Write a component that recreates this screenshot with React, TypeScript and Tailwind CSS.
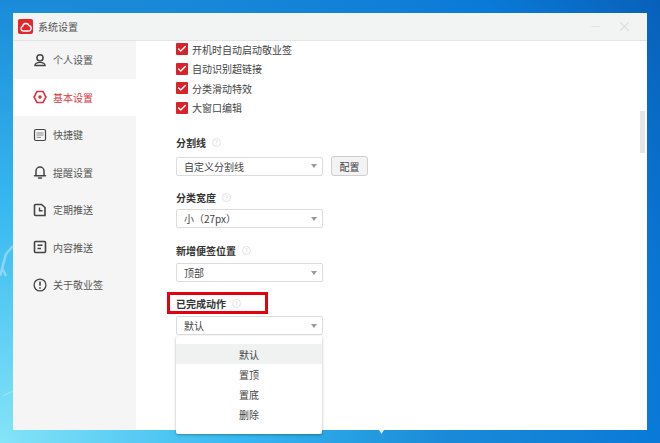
import { Check, Minus, X } from 'lucide-react'

const font = { fontFamily: '"Noto Sans CJK SC", "Noto Sans", sans-serif' }

const menu = [
  { label: '个人设置', icon: 'user' },
  { label: '基本设置', icon: 'gear', active: true },
  { label: '快捷键', icon: 'key' },
  { label: '提醒设置', icon: 'bell' },
  { label: '定期推送', icon: 'clock' },
  { label: '内容推送', icon: 'doc' },
  { label: '关于敬业签', icon: 'info' },
]

function MenuIcon({ name, color }: { name: string; color: string }) {
  return (
    <svg width="14" height="14" viewBox="0 0 14 14" fill="none" stroke={color} strokeWidth="1.5">
      {name === 'user' && (
        <>
          <circle cx="7" cy="4.800" r="3.100" />
          <path d="M1.800 12.500c.4-2.200 2.400-3.200 5.200-3.200s4.800 1 5.200 3.200z" strokeLinejoin="round" strokeWidth="1.300" />
        </>
      )}
      {name === 'gear' && (
        <>
          <path d="M4 1.500h6L13 7l-3 5.500H4L1 7z" strokeWidth="1.600" />
          <circle cx="7" cy="7" r="1.800" fill={color} stroke="none" />
        </>
      )}
      {name === 'key' && (
        <>
          <rect x="1.500" y="1.500" width="11" height="11" rx="1.500" strokeWidth="1.200" />
          <path d="M3.500 5h7M3.500 7h7M3.500 9.300h4.500" strokeWidth="1" stroke="#888" />
        </>
      )}
      {name === 'bell' && (
        <>
          <path d="M3 10.500V6a4 4 0 0 1 8 0v4.500" />
          <path d="M1.500 10.800h11M5.500 13h3" strokeLinecap="round" />
        </>
      )}
      {name === 'clock' && (
        <>
          <path d="M2.500 1.500h6l3.500 3v8h-9.500a1 1 0 0 1-1-1v-9a1 1 0 0 1 1-1z" strokeWidth="1.600" />
          <path d="M6.500 4.500v3.200h3" strokeWidth="1.400" />
        </>
      )}
      {name === 'doc' && (
        <>
          <rect x="1.500" y="1.500" width="11" height="11" rx="1" strokeWidth="1.600" />
          <path d="M4.500 5.200h5M4.500 8.500h3.500" strokeWidth="1.400" />
        </>
      )}
      {name === 'info' && (
        <>
          <circle cx="7" cy="7" r="5.900" strokeWidth="1.300" />
          <path d="M7 3.500v4.300M7 9.300v1.400" strokeWidth="1.600" />
        </>
      )}
    </svg>
  )
}

function Help() {
  return (
    <span className="w-[9px] h-[9px] rounded-full border border-[#e2e2e2] text-[6px] leading-[7px] text-center font-normal text-[#cfcfcf] ml-[6px]">
      ?
    </span>
  )
}

function CheckRow({ label }: { label: string }) {
  return (
    <div className="flex items-center h-[19.500px] gap-[4px]">
      <span className="w-[12px] h-[12px] bg-[#d9232b] rounded-[1px] flex items-center justify-center">
        <Check size={10} color="#fff" strokeWidth={3.500} />
      </span>
      <span>{label}</span>
    </div>
  )
}

function Label({ text }: { text: string }) {
  return (
    <div className="flex items-center h-[14px] font-bold text-[#333]">
      {text}
      <Help />
    </div>
  )
}

function Select({ value }: { value: string }) {
  return (
    <div className="w-[147px] h-[19px] bg-white border border-[#dcdcdc] rounded-[2px] flex items-center justify-between pl-[7px] pr-[5px] text-[#444]">
      <span>{value}</span>
      <svg width="6" height="4" viewBox="0 0 6 4">
        <path d="M0 0h6L3 4z" fill="#999" />
      </svg>
    </div>
  )
}

export default function App() {
  return (
    <div
      className="relative w-[660px] h-[443px] overflow-hidden p-[13px] bg-[radial-gradient(circle_at_0%_100%,#85e4f8_0%,#36b8f0_30%,#1a8ad8_56%,#0a7ad8_82%,#0860b8_100%)]"
      style={font}
    >
      {/* wallpaper streaks on the left edge */}
      <svg className="absolute left-0 top-[240px]" width="13" height="160" viewBox="0 0 13 160" fill="none" stroke="#fff" strokeOpacity="0.35">
        <path d="M0 36 6 14 13 6M2 28l4 8" strokeWidth="2.500" />
        <path d="M3 156 13 151" strokeWidth="1" />
      </svg>

      <div className="relative w-[634px] h-[417px] bg-white flex flex-col text-[10px] text-[#444]">
        {/* title bar */}
        <div className="h-[28px] shrink-0 bg-[#f2f3f3] border-b border-[#e4e4e4] flex items-center pl-[5px] pr-[15px]">
          <span className="w-[15px] h-[15px] bg-[#e0282e] rounded-[2px] flex items-center justify-center">
            <svg width="12" height="10" viewBox="0 0 12 10" fill="none" stroke="#fff" strokeWidth="1.300">
              <path d="M3.200 9a2.400 2.400 0 0 1-.5-4.700A3.300 3.300 0 0 1 9 3.500 2.800 2.800 0 0 1 8.800 9z" />
            </svg>
          </span>
          <span className="ml-[5px] text-[#555]">系统设置</span>
          <Minus size={13} color="#e2e2e2" className="ml-auto" />
          <X size={15} color="#dedede" className="ml-[15px]" />
        </div>

        <div className="flex flex-1 min-h-0">
          {/* sidebar */}
          <div className="w-[123px] shrink-0 bg-[#f5f5f5]">
            {menu.map((m) => (
              <div
                key={m.label}
                className={`h-[37.500px] flex items-center pl-[20px] gap-[6px] ${
                  m.active ? 'bg-white text-[#d9363e]' : 'text-[#555]'
                }`}
              >
                <MenuIcon name={m.icon} color={m.active ? '#d9363e' : '#444'} />
                <span>{m.label}</span>
              </div>
            ))}
          </div>

          {/* content */}
          <div className="relative flex-1 pl-[40px]">
            <div className="mt-[-1.500px]">
              <CheckRow label="开机时自动启动敬业签" />
              <CheckRow label="自动识别超链接" />
              <CheckRow label="分类滑动特效" />
              <CheckRow label="大窗口编辑" />
            </div>

            <div className="mt-[18px]">
              <Label text="分割线" />
              <div className="flex items-center gap-[8px] mt-[6.500px]">
                <Select value="自定义分割线" />
                <button className="w-[37px] h-[20px] bg-[#f3f3f3] border border-[#cfcfcf] rounded-[3px] text-[#444]">
                  配置
                </button>
              </div>
            </div>

            <div className="mt-[14px]">
              <Label text="分类宽度" />
              <div className="mt-[5px]">
                <Select value="小（27px）" />
              </div>
            </div>

            <div className="mt-[15px]">
              <Label text="新增便签位置" />
              <div className="mt-[6px]">
                <Select value="顶部" />
              </div>
            </div>

            <div className="mt-[14px]">
              <div className="relative">
                <Label text="已完成动作" />
                <div className="absolute left-[-9px] top-[-4px] w-[101px] h-[22px] border-[3px] border-[#e3000f]" />
              </div>
              <div className="mt-[6px]">
                <Select value="默认" />
              </div>
              {/* open dropdown */}
              <div className="absolute left-[40px] top-[295px] w-[146px] h-[98px] bg-white rounded-[2px] shadow-[0_1px_3px_rgba(0,0,0,0.3)] pt-[8px] text-center text-[#444] z-10">
                <div className="h-[20px] leading-[21px] bg-[#f0f1f1]">默认</div>
                <div className="h-[20px] leading-[21px]">置顶</div>
                <div className="h-[20px] leading-[21px]">置底</div>
                <div className="h-[20px] leading-[21px]">删除</div>
              </div>
            </div>

            {/* scrollbar */}
            <div className="absolute right-[2px] top-[70px] w-[5px] h-[42px] bg-[#e6e6e6]" />
          </div>
        </div>
      </div>

      {/* small notch under the window */}
      <svg className="absolute left-[379px] top-[430px]" width="5" height="4" viewBox="0 0 5 4">
        <path d="M0 0h5L2.500 4z" fill="#dff5e0" />
      </svg>
    </div>
  )
}
